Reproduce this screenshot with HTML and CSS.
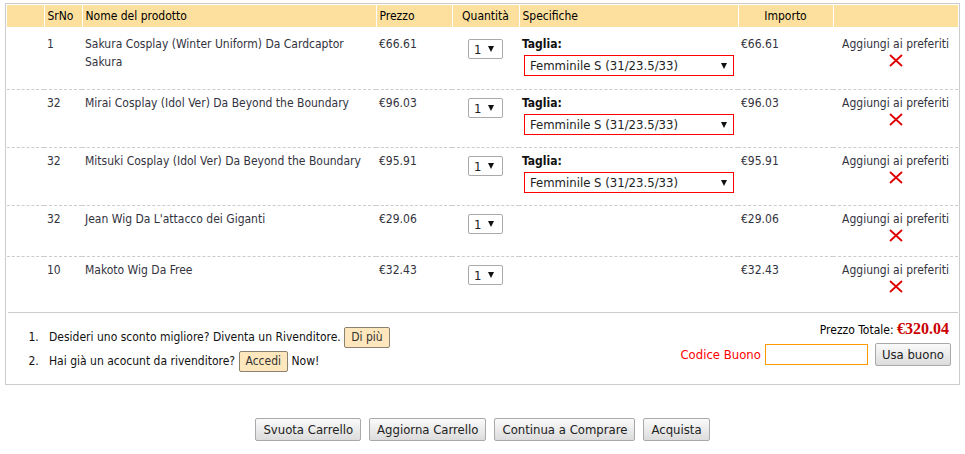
FILE: index.html
```html
<!DOCTYPE html>
<html lang="it">
<head>
    <meta charset="UTF-8">
    <meta name="viewport" content="width=device-width, initial-scale=1.0">
    <title>Carrello</title>
    <link rel="stylesheet" href="styles.css">
</head>
<body>
    <div class="cart-box">
        <table class="cart-table">
            <colgroup>
                <col style="width: 37px">
                <col style="width: 38px">
                <col style="width: 294px">
                <col style="width: 76px">
                <col style="width: 67px">
                <col style="width: 219px">
                <col style="width: 95px">
                <col style="width: 125px">
            </colgroup>
            <thead>
                <tr>
                    <th></th>
                    <th>SrNo</th>
                    <th>Nome del prodotto</th>
                    <th>Prezzo</th>
                    <th class="center">Quantità</th>
                    <th>Specifiche</th>
                    <th class="center">Importo</th>
                    <th></th>
                </tr>
            </thead>
            <tbody>
                <tr class="row-first">
                    <td></td>
                    <td>1</td>
                    <td>Sakura Cosplay (Winter Uniform) Da Cardcaptor Sakura</td>
                    <td>€66.61</td>
                    <td class="center"><span class="qty"><select><option>1</option></select></span></td>
                    <td>
                        <div class="spec-label">Taglia:</div>
                        <span class="size"><select><option>Femminile S (31/23.5/33)</option></select></span>
                    </td>
                    <td>€66.61</td>
                    <td class="center">
                        <a class="fav" href="#">Aggiungi ai preferiti</a>
                        <a class="remove" href="#"><svg width="14" height="13" viewBox="0 0 14 13"><path d="M1 1 L13 12 M13 1 L1 12" stroke="#e00000" stroke-width="1.8" fill="none"/></svg></a>
                    </td>
                </tr>
                <tr class="row-spec">
                    <td></td>
                    <td>32</td>
                    <td>Mirai Cosplay (Idol Ver) Da Beyond the Boundary</td>
                    <td>€96.03</td>
                    <td class="center"><span class="qty"><select><option>1</option></select></span></td>
                    <td>
                        <div class="spec-label">Taglia:</div>
                        <span class="size"><select><option>Femminile S (31/23.5/33)</option></select></span>
                    </td>
                    <td>€96.03</td>
                    <td class="center">
                        <a class="fav" href="#">Aggiungi ai preferiti</a>
                        <a class="remove" href="#"><svg width="14" height="13" viewBox="0 0 14 13"><path d="M1 1 L13 12 M13 1 L1 12" stroke="#e00000" stroke-width="1.8" fill="none"/></svg></a>
                    </td>
                </tr>
                <tr class="row-spec">
                    <td></td>
                    <td>32</td>
                    <td>Mitsuki Cosplay (Idol Ver) Da Beyond the Boundary</td>
                    <td>€95.91</td>
                    <td class="center"><span class="qty"><select><option>1</option></select></span></td>
                    <td>
                        <div class="spec-label">Taglia:</div>
                        <span class="size"><select><option>Femminile S (31/23.5/33)</option></select></span>
                    </td>
                    <td>€95.91</td>
                    <td class="center">
                        <a class="fav" href="#">Aggiungi ai preferiti</a>
                        <a class="remove" href="#"><svg width="14" height="13" viewBox="0 0 14 13"><path d="M1 1 L13 12 M13 1 L1 12" stroke="#e00000" stroke-width="1.8" fill="none"/></svg></a>
                    </td>
                </tr>
                <tr class="row-plain">
                    <td></td>
                    <td>32</td>
                    <td>Jean Wig Da L'attacco dei Giganti</td>
                    <td>€29.06</td>
                    <td class="center"><span class="qty"><select><option>1</option></select></span></td>
                    <td></td>
                    <td>€29.06</td>
                    <td class="center">
                        <a class="fav" href="#">Aggiungi ai preferiti</a>
                        <a class="remove" href="#"><svg width="14" height="13" viewBox="0 0 14 13"><path d="M1 1 L13 12 M13 1 L1 12" stroke="#e00000" stroke-width="1.8" fill="none"/></svg></a>
                    </td>
                </tr>
                <tr class="row-plain">
                    <td></td>
                    <td>10</td>
                    <td>Makoto Wig Da Free</td>
                    <td>€32.43</td>
                    <td class="center"><span class="qty"><select><option>1</option></select></span></td>
                    <td></td>
                    <td>€32.43</td>
                    <td class="center">
                        <a class="fav" href="#">Aggiungi ai preferiti</a>
                        <a class="remove" href="#"><svg width="14" height="13" viewBox="0 0 14 13"><path d="M1 1 L13 12 M13 1 L1 12" stroke="#e00000" stroke-width="1.8" fill="none"/></svg></a>
                    </td>
                </tr>
            </tbody>
        </table>

        <div class="cart-footer">
            <ol class="tips">
                <li>Desideri uno sconto migliore? Diventa un Rivenditore. <a class="btn-small" href="#">Di più</a></li>
                <li>Hai già un acocunt da rivenditore? <a class="btn-small" href="#">Accedi</a> Now!</li>
            </ol>
            <div class="totals">
                <div class="total-line">Prezzo Totale: <span class="total-price">€320.04</span></div>
                <div class="coupon">
                    <label class="coupon-label" for="coupon">Codice Buono</label>
                    <input class="coupon-input" id="coupon" type="text">
                    <button class="btn btn-coupon">Usa buono</button>
                </div>
            </div>
        </div>
    </div>

    <div class="actions">
        <button class="btn">Svuota Carrello</button>
        <button class="btn">Aggiorna Carrello</button>
        <button class="btn">Continua a Comprare</button>
        <button class="btn">Acquista</button>
    </div>
</body>
</html>
```

FILE: styles.css
```css
body {
    margin: 0;
    padding: 3px 5px 0;
    font-family: "DejaVu Sans Condensed", "DejaVu Sans", sans-serif;
    font-size: 12px;
    color: #333340;
    background: #fff;
}

.cart-box {
    border: 1px solid #cccccc;
    padding: 1px;
}

.cart-table {
    width: 100%;
    table-layout: fixed;
    border-collapse: collapse;
}

.cart-table th {
    height: 22px;
    padding: 0 3px;
    background: #fde09e;
    border-left: 1px solid #fff;
    font-weight: normal;
    color: #000;
    text-align: left;
}

.cart-table th:first-child {
    border-left: none;
}

.cart-table td {
    padding: 4px 3px 0;
    vertical-align: top;
    line-height: 18px;
    border-bottom: 1px dashed #cccccc;
}

.cart-table tr:last-child td {
    border-bottom: none;
}

.cart-table .center {
    text-align: center;
}

.row-first td {
    height: 54px;
    padding-top: 8px;
}

.row-spec td {
    height: 53px;
}

.row-plain td {
    height: 46px;
}

.qty {
    position: relative;
    display: inline-block;
    margin-top: 4px;
}

.qty select,
.size select {
    appearance: none;
    -webkit-appearance: none;
    font-family: inherit;
    font-size: 13px;
    color: #222;
    background: #fff;
    outline: none;
}

.qty select {
    width: 35px;
    height: 20px;
    padding: 0 0 0 5px;
    border: 1px solid #aaaaaa;
    border-radius: 2px;
}

.qty::after,
.size::after {
    content: "";
    position: absolute;
    border-left: 3px solid transparent;
    border-right: 3px solid transparent;
    border-top: 6px solid #111;
    pointer-events: none;
}

.qty::after {
    top: 7px;
    right: 9px;
}

.size {
    position: relative;
    display: inline-block;
    margin: 2px 0 0 2px;
}

.size::after {
    top: 8px;
    right: 7px;
}

.size select {
    width: 210px;
    height: 21px;
    padding: 0 0 0 5px;
    border: 1px solid #ff0000;
    border-radius: 0;
}

.spec-label {
    font-weight: bold;
    color: #111;
}

.fav {
    display: block;
    color: #333340;
    text-decoration: none;
}

.remove {
    display: block;
    height: 14px;
    margin-top: 1px;
}

.remove svg {
    display: block;
    margin: 0 auto;
}

.cart-footer {
    display: flex;
    justify-content: space-between;
    margin: 5px 0 0 1px;
    border-top: 1px solid #cccccc;
    padding: 0 7px 10px 0;
}

.tips {
    margin: 12px 0 0;
    padding-left: 41px;
    color: #111;
}

.tips li {
    line-height: 24px;
}

.tips li::marker {
    content: counter(list-item) ".\00a0\00a0\00a0";
}

.btn-small {
    display: inline-block;
    padding: 0 6px;
    line-height: 19px;
    background: #ffe7bd;
    border: 1px solid #8a8170;
    border-radius: 2px;
    color: #333;
    text-decoration: none;
}

.totals {
    padding-top: 6px;
    display: flex;
    flex-direction: column;
    align-items: flex-end;
}

.total-line {
    line-height: 20px;
    color: #000;
    padding-right: 2px;
}

.total-price {
    font-family: "Liberation Serif", serif;
    font-weight: bold;
    font-size: 16px;
    color: #cc0000;
}

.coupon {
    display: flex;
    align-items: center;
    gap: 4px;
    margin-top: 3px;
}

.coupon-label {
    color: #ff0000;
    font-size: 13px;
}

.coupon-input {
    width: 103px;
    height: 21px;
    box-sizing: border-box;
    border: 1px solid #ff9900;
    margin-right: 3px;
    font-family: inherit;
}

.btn {
    height: 23px;
    padding: 0 7px;
    font-family: inherit;
    font-size: 13px;
    color: #222;
    background: linear-gradient(#fafafa, #dcdcdc);
    border: 1px solid #a9a9a9;
    border-radius: 2px;
}

.btn-coupon {
    padding: 0 6px;
}

.actions {
    display: flex;
    justify-content: center;
    gap: 8px;
    margin-top: 33px;
}
```
